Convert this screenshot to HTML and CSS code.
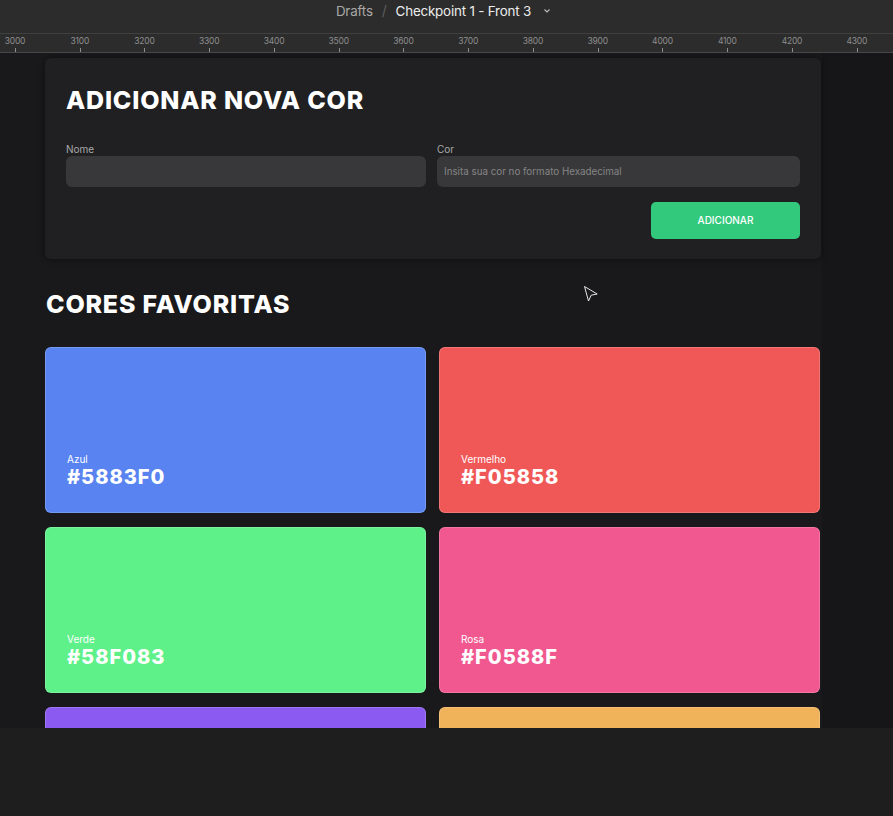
FILE: index.html
```html
<!DOCTYPE html>
<html lang="pt-BR">
<head>
<meta charset="utf-8">
<title>Checkpoint 1 - Front 3</title>
<link rel="stylesheet" href="styles.css">
</head>
<body>
<header class="topbar">
  <span class="crumb-muted">Drafts</span>
  <span class="sep">/</span>
  <span class="crumb">Checkpoint 1 - Front 3</span>
  <svg class="chev" width="8" height="6" viewBox="0 0 8 6"><path d="M1.5 1.5 L4 4 L6.5 1.5" fill="none" stroke="#bdbdbd" stroke-width="1.1"/></svg>
</header>
<div class="ruler">
  <div class="ruler-track">
    <div class="mark"><span>3000</span></div>
    <div class="mark"><span>3100</span></div>
    <div class="mark"><span>3200</span></div>
    <div class="mark"><span>3300</span></div>
    <div class="mark"><span>3400</span></div>
    <div class="mark"><span>3500</span></div>
    <div class="mark"><span>3600</span></div>
    <div class="mark"><span>3700</span></div>
    <div class="mark"><span>3800</span></div>
    <div class="mark"><span>3900</span></div>
    <div class="mark"><span>4000</span></div>
    <div class="mark"><span>4100</span></div>
    <div class="mark"><span>4200</span></div>
    <div class="mark"><span>4300</span></div>
  </div>
</div>
<main class="canvas">
  <section class="panel">
    <h1 class="title">ADICIONAR NOVA COR</h1>
    <div class="fields">
      <div class="field">
        <span class="label">Nome</span>
        <div class="input"></div>
      </div>
      <div class="field">
        <span class="label">Cor</span>
        <div class="input"><span class="placeholder">Insita sua cor no formato Hexadecimal</span></div>
      </div>
    </div>
    <div class="actions">
      <div class="btn">ADICIONAR</div>
    </div>
  </section>
  <h2 class="title section-title">CORES FAVORITAS</h2>
  <div class="grid">
    <div class="card blue"><span class="name">Azul</span><span class="hex">#5883F0</span></div>
    <div class="card red"><span class="name">Vermelho</span><span class="hex">#F05858</span></div>
    <div class="card green"><span class="name">Verde</span><span class="hex">#58F083</span></div>
    <div class="card pink"><span class="name">Rosa</span><span class="hex">#F0588F</span></div>
    <div class="card purple"></div>
    <div class="card orange"></div>
  </div>
  <svg class="cursor" width="16" height="18" viewBox="0 0 16 18"><path d="M1.5 1.5 L5.5 16 L8.2 10.2 L14.2 9 Z" fill="#1a191b" stroke="#e8e8e8" stroke-width="1" stroke-linejoin="round"/></svg>
</main>
<footer class="bottom"></footer>
</body>
</html>
```
FILE: styles.css
```css
* { box-sizing: border-box; }
html, body { margin: 0; padding: 0; }
body {
  width: 893px;
  height: 816px;
  overflow: hidden;
  background: #1e1e1e;
  font-family: Inter, "Noto Sans", sans-serif;
  color: #fff;
}
.topbar {
  height: 33px;
  background: #2c2c2c;
  display: flex;
  align-items: center;
  justify-content: center;
  gap: 9px;
  font-size: 13.4px;
  padding-bottom: 12px;
  padding-right: 6px;
  letter-spacing: -0.2px;
}
.crumb-muted { color: #a8a8a8; }
.sep { color: #5e5e5e; font-size: 14px; }
.crumb { color: #ececec; }
.chev { margin-left: 3px; }
.ruler {
  height: 20px;
  background: #2c2c2c;
  border-top: 1px solid #404040;
  border-bottom: 1px solid #474747;
  overflow: hidden;
}
.ruler-track {
  display: flex;
  margin-left: -17.4px;
}
.mark {
  flex: 0 0 64.75px;
  height: 18px;
  position: relative;
  text-align: center;
  font-size: 8.5px;
  color: #8d8d8d;
  line-height: 10px;
  padding-top: 2px;
  letter-spacing: -0.2px;
}
.mark::after {
  content: "";
  position: absolute;
  left: 50%;
  bottom: 0;
  width: 1px;
  height: 4px;
  background: #8d8d8d;
}
.canvas {
  position: relative;
  height: 675px;
  overflow: hidden;
  background: linear-gradient(to right, #19181a 0, #19181a 822px, #161517 822px);
  padding: 5px 0 0 45px;
}
.panel {
  width: 776px;
  height: 201px;
  background: #202022;
  border-radius: 6px;
  box-shadow: 0 0 6px rgba(0, 0, 0, 0.45);
  padding: 25px 21px 20px 21px;
}
.title {
  margin: 0;
  font-weight: 800;
  font-size: 25px;
  line-height: 34px;
  letter-spacing: 0.8px;
  color: #fff;
}
.fields {
  display: grid;
  grid-template-columns: 360px 1fr;
  gap: 11px;
  margin-top: 26px;
}
.field { display: flex; flex-direction: column; gap: 1px; }
.label {
  font-size: 10px;
  line-height: 12px;
  color: #a9a9a9;
}
.input {
  height: 31px;
  background: #38383a;
  border-radius: 6px;
  display: flex;
  align-items: center;
  padding-left: 7px;
}
.placeholder {
  font-size: 9.8px;
  color: #858585;
}
.actions {
  display: flex;
  justify-content: flex-end;
  margin-top: 15px;
}
.btn {
  width: 149px;
  height: 37px;
  border-radius: 5px;
  background: #33c97d;
  color: #fff;
  font-size: 10px;
  font-weight: 500;
  display: flex;
  align-items: center;
  justify-content: center;
  padding-bottom: 1px;
}
.section-title {
  line-height: 32px;
  margin-top: 29px;
  margin-left: 1px;
}
.grid {
  display: grid;
  width: 775px;
  grid-template-columns: 381px 381px;
  grid-auto-rows: 166px;
  gap: 14px 13px;
  margin-top: 27px;
}
.card {
  border-radius: 6px;
  box-shadow: inset 0 0 0 1px rgba(255, 255, 255, 0.18);
  display: flex;
  flex-direction: column;
  justify-content: flex-end;
  padding: 0 22px 24px 22px;
}
.name {
  font-size: 10px;
  line-height: 12px;
  color: #fff;
}
.hex {
  font-size: 20px;
  line-height: 24px;
  font-weight: 800;
  color: #fff;
  letter-spacing: 1px;
}
.blue { background: #5883f0; }
.red { background: #f05858; }
.green { background: #5ef18a; }
.pink { background: #f0588f; }
.purple { background: #8b5af0; }
.orange { background: #f0b35a; }
.cursor {
  position: absolute;
  left: 583px;
  top: 232px;
}
.bottom {
  height: 88px;
  background: #1e1e1e;
}
```
